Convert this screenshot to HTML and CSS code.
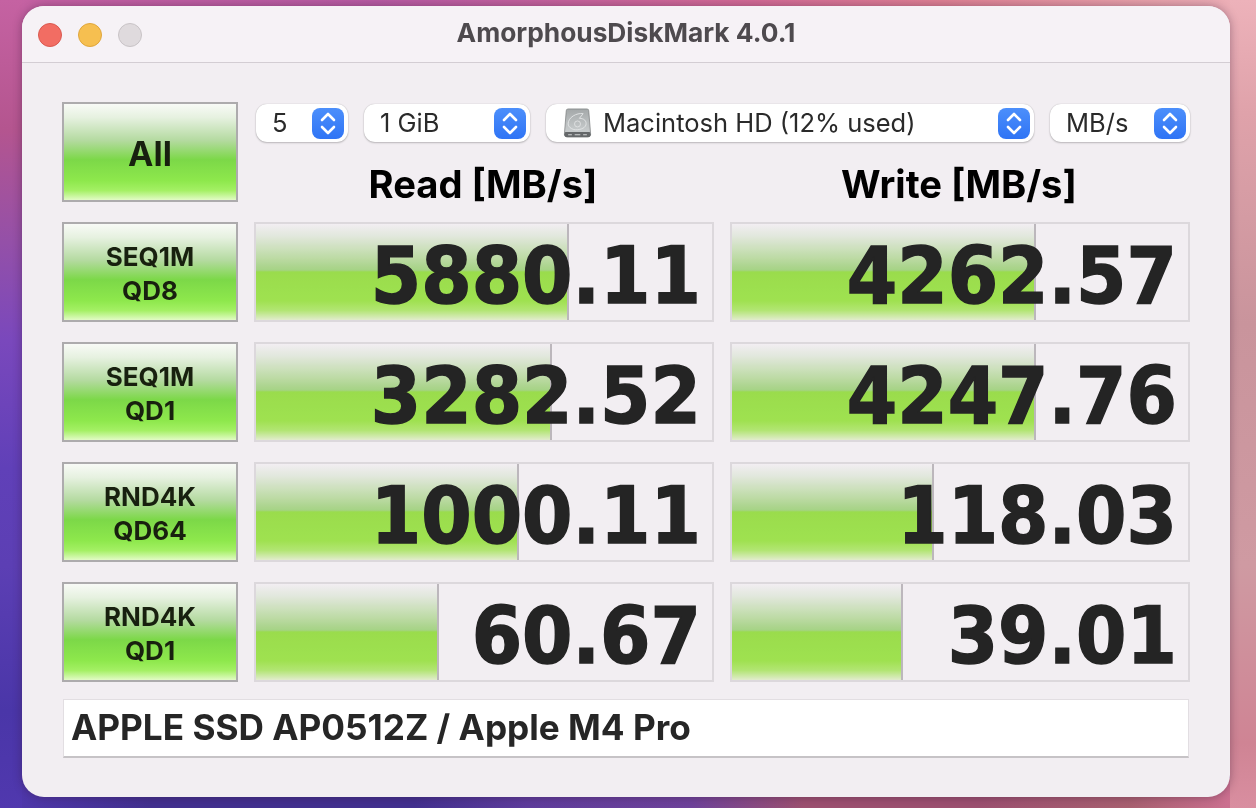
FILE: index.html
```html
<!DOCTYPE html>
<html lang="en">
<head>
<meta charset="utf-8">
<title>AmorphousDiskMark 4.0.1</title>
<link rel="stylesheet" href="styles.css">
</head>
<body>
<main class="window">
  <header class="titlebar">
    <div class="lights">
      <span class="light red"></span>
      <span class="light yellow"></span>
      <span class="light gray"></span>
    </div>
    <h1 class="title">AmorphousDiskMark 4.0.1</h1>
  </header>
  <div class="content">
    <div class="grid">
      <button class="run run-all">All</button>
      <div class="head">
        <div class="selects">
          <div class="select s-count"><span class="select-text">5</span><span class="stepper"><svg viewBox="0 0 32 31"><path d="M10 12 16 6l6 6M10 19l6 6 6-6"/></svg></span></div>
          <div class="select s-size"><span class="select-text">1 GiB</span><span class="stepper"><svg viewBox="0 0 32 31"><path d="M10 12 16 6l6 6M10 19l6 6 6-6"/></svg></span></div>
          <div class="select s-disk">
            <svg class="disk" viewBox="0 0 30 32">
              <defs>
                <linearGradient id="dg" x1="0" y1="0" x2="0" y2="1"><stop offset="0" stop-color="#a4a8a9"/><stop offset=".8" stop-color="#c8cccd"/><stop offset="1" stop-color="#8a8d8f"/></linearGradient>
              </defs>
              <path d="M3 3Q3 1 5 1H25Q27 1 27 3L29 28Q29 31 26 31H4Q1 31 1 28Z" fill="url(#dg)" stroke="#7d8082" stroke-width=".8"/>
              <path d="M2 25.500H28L29 28Q29 31 26 31H4Q1 31 1 28Z" fill="#65686a"/>
              <path d="M5 17C5 10 14 5 21 6L17 11C22 11 25 14 24 18C23 22 16 24 11 23C8 22 5 20 5 17Z" fill="none" stroke="#e2e4e5" stroke-width="1"/>
              <circle cx="15" cy="17" r="3.200" fill="none" stroke="#e2e4e5" stroke-width=".9"/>
              <path d="M5 28.500h4M12 28.500h6M21 28.500h4" stroke="#cfd1d2" stroke-width="1.100"/>
            </svg>
            <span class="select-text">Macintosh HD (12% used)</span><span class="stepper"><svg viewBox="0 0 32 31"><path d="M10 12 16 6l6 6M10 19l6 6 6-6"/></svg></span>
          </div>
          <div class="select s-unit"><span class="select-text">MB/s</span><span class="stepper"><svg viewBox="0 0 32 31"><path d="M10 12 16 6l6 6M10 19l6 6 6-6"/></svg></span></div>
        </div>
        <div class="col-heads">
          <div class="col-head">Read [MB/s]</div>
          <div class="col-head">Write [MB/s]</div>
        </div>
      </div>

      <button class="run">SEQ1M<br>QD8</button>
      <div class="meter"><div class="fill" style="width:68.600%"></div><span class="value">5880.11</span></div>
      <div class="meter"><div class="fill" style="width:66.700%"></div><span class="value">4262.57</span></div>

      <button class="run">SEQ1M<br>QD1</button>
      <div class="meter"><div class="fill" style="width:64.900%"></div><span class="value">3282.52</span></div>
      <div class="meter"><div class="fill" style="width:66.700%"></div><span class="value">4247.76</span></div>

      <button class="run">RND4K<br>QD64</button>
      <div class="meter"><div class="fill" style="width:57.700%"></div><span class="value">1000.11</span></div>
      <div class="meter"><div class="fill" style="width:44.300%"></div><span class="value">118.03</span></div>

      <button class="run">RND4K<br>QD1</button>
      <div class="meter"><div class="fill" style="width:40.200%"></div><span class="value">60.67</span></div>
      <div class="meter"><div class="fill" style="width:37.600%"></div><span class="value">39.01</span></div>
    </div>
    <div class="device">APPLE SSD AP0512Z / Apple M4 Pro</div>
  </div>
</main>
</body>
</html>
```
FILE: styles.css
```css
* { box-sizing: border-box; }
html, body { margin: 0; height: 100%; }
body {
  width: 1256px;
  height: 808px;
  overflow: hidden;
  padding: 6px 26px 11px 22px;
  font-family: "Liberation Sans", Arial, sans-serif;
  background:
    linear-gradient(180deg, #c562a2 0%, #b4558f 16%, #9450a8 30%, #7a48bc 42%, #6040b8 58%, #5c3fb4 70%, #4a36a8 88%, #5038ae 100%) left / 22px 100% no-repeat,
    linear-gradient(180deg, #edb2ba 0%, #dfa2aa 14%, #c9949c 40%, #cf9aa2 70%, #cf8494 92%, #d98ea0 100%) right / 26px 100% no-repeat,
    linear-gradient(90deg, #c562a2 0%, #b85ca4 30%, #d46c96 60%, #df8294 75%, #e8a4ac 92%, #edb2ba 100%) top / 100% 30px no-repeat,
    linear-gradient(90deg, #5038ae 0%, #42308f 12%, #42308f 33%, #5e3c9c 42%, #6e429a 55%, #9c5070 64%, #9c5070 78%, #a86070 90%, #cc7090 98%, #d98ea0 100%) bottom / 100% 30px no-repeat,
    #8a4a9a;
}
.window {
  width: 1208px;
  height: 791px;
  background: #f2eef2;
  border-radius: 22px;
  overflow: hidden;
  box-shadow: 0 0 10px rgba(50,20,50,.4);
}
.titlebar {
  height: 57px;
  background: #f6f2f6;
  border-bottom: 1px solid #d3cdd3;
  display: flex;
  align-items: center;
  position: relative;
}
.lights { display: flex; gap: 16px; padding-left: 16px; margin-top: 1px; }
.light { width: 24px; height: 24px; border-radius: 50%; border: 1px solid; }
.red { background: #f26d63; border-color: #d95950; }
.yellow { background: #f6bf50; border-color: #dfa63c; }
.gray { background: #dfdadd; border-color: #c8c3c6; }
.title {
  position: absolute;
  left: 0; right: 0; top: 0; bottom: 4px;
  margin: 0;
  display: flex;
  align-items: center;
  justify-content: center;
  font-size: 26.300px;
  font-weight: 700;
  color: #4e4a4e;
  font-family: "Inter", "Liberation Sans", sans-serif;
}
.content { padding: 39px 40px 0; }
.grid {
  display: grid;
  grid-template-columns: 176px 460px 460px;
  grid-template-rows: repeat(5, 100px);
  gap: 20px 16px;
}
.run {
  margin: 0;
  padding: 4px 0 0;
  border: 2px solid #adabad;
  border-radius: 0;
  color: #18200f;
  font-family: "Inter", "Liberation Sans", sans-serif;
  font-weight: 700;
  font-size: 26px;
  line-height: 34px;
  background: linear-gradient(180deg, #f8faf6 0%, #e6f1e0 14%, #b4daa0 38%, #7cd848 58%, #8ee84c 80%, #a4f064 90%, #e2fbc6 100%);
}
.run-all { font-size: 34px; padding-top: 3px; }
.head { grid-column: 2 / 4; display: flex; flex-direction: column; }
.selects { display: flex; gap: 16px; height: 38px; margin: 2px 0 0 2px; }
.select {
  height: 38px;
  background: #fff;
  border-radius: 11px;
  box-shadow: 0 0 1px rgba(0,0,0,.25), 0 1px 2px rgba(0,0,0,.22);
  display: flex;
  align-items: center;
  padding: 0 4px 0 16px;
  color: #2a2a2a;
  font-family: "Inter", "Liberation Sans", sans-serif;
  font-size: 25.500px;
}
.select-text { flex: 1; white-space: nowrap; margin-top: -2px; }
.s-count { width: 92px; padding-left: 16px; }
.s-size { width: 166px; }
.s-disk { width: 488px; padding-left: 17px; gap: 11px; }
.s-unit { width: 140px; }
.disk { width: 29px; height: 30px; flex: none; }
.stepper {
  width: 32px;
  height: 31px;
  border-radius: 8px;
  background: linear-gradient(180deg, #4c8ffb, #2f74f5);
  flex: none;
}
.stepper svg { width: 32px; height: 31px; display: block; }
.stepper path { fill: none; stroke: #fff; stroke-width: 2.600; stroke-linecap: round; stroke-linejoin: round; }
.col-heads { display: grid; grid-template-columns: 460px 460px; gap: 16px; margin: 19px 0 0 -1px; }
.col-head {
  text-align: center;
  font-family: "Inter", "Liberation Sans", sans-serif;
  font-size: 38.200px;
  font-weight: 700;
  line-height: 46px;
  color: #000;
}
.meter {
  position: relative;
  background: #f2eef2;
  border: 2px solid #dcd8dc;
  display: flex;
  align-items: center;
  justify-content: flex-end;
  padding: 8px 11px 0 0;
  overflow: hidden;
}
.fill {
  position: absolute;
  left: 0; top: 0; bottom: 0;
  border-right: 2px solid #c6c4c6;
  mix-blend-mode: multiply;
  background: linear-gradient(180deg, #ffffff 0%, #eff9ea 12%, #c6eaac 36%, #aee28c 48%, #a2ec50 50%, #a8f254 80%, #bcf67a 90%, #eefdd8 100%);
}
.value {
  font-family: "DejaVu Sans", Verdana, sans-serif;
  font-weight: 700;
  font-size: 72.500px;
  line-height: 1;
  color: #242424;
  -webkit-text-stroke: 1.400px #242424;
  transform: scaleY(1.08);
}
.device {
  margin: 17px 1px 0;
  height: 59px;
  background: #fff;
  border: 1px solid #e2dee2;
  border-bottom: 2px solid #c6c3c6;
  padding: 0 0 2px 7px;
  display: flex;
  align-items: center;
  font-family: "Inter", "Liberation Sans", sans-serif;
  font-weight: 700;
  font-size: 35.200px;
  color: #262626;
}
```
